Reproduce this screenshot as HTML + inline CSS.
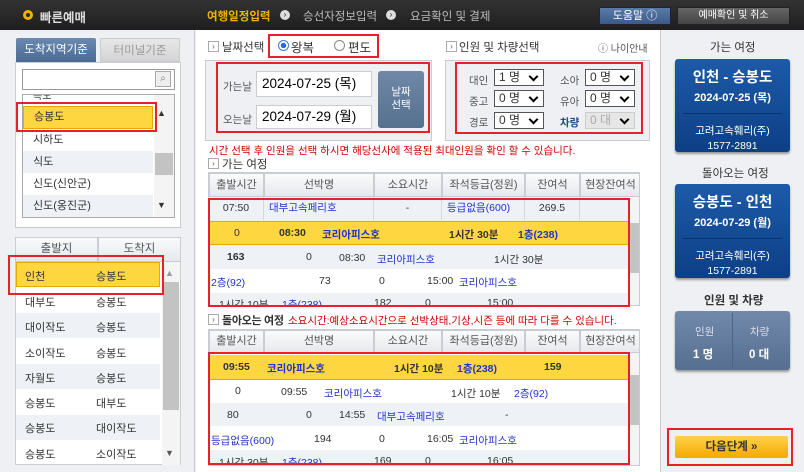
<!DOCTYPE html>
<html><head><meta charset="utf-8"><style>
*{margin:0;padding:0;box-sizing:border-box}
body{width:804px;height:472px;overflow:hidden;background:#eef0f3;font-family:"Liberation Sans","Noto Sans CJK KR",sans-serif;font-size:10.5px;color:#333;position:relative}
.a{position:absolute}
.red{position:absolute;border:2px solid #e8202a}
.t{position:absolute;white-space:nowrap}
.lnk{color:#2233cc}
.hd{background:linear-gradient(#fafbfc,#e6e8ec);border:1px solid #c9cdd3;color:#555;font-size:11px}
.sel{position:absolute;height:17px;border:1px solid #555;background:#fff;font-size:12px;padding-left:4px;line-height:15px}
.sel:after{content:"";position:absolute;right:6px;top:3px;width:5px;height:5px;border-right:2px solid #000;border-bottom:2px solid #000;transform:rotate(45deg)}
.card{position:absolute;background:linear-gradient(#1d5aa8,#0d3f86);border-radius:3px;color:#fff;text-align:center;box-shadow:0 2px 2px #999}
.cell{position:absolute;text-align:center;line-height:23px;border-right:1px solid #d5d8dd;height:23px}
.arr{position:absolute;width:11px;height:11px;border:1px solid #aaa;background:#fff;font-size:8px;line-height:9px;text-align:center;color:#555}
</style></head><body>
<!-- header -->
<div class="a" style="left:0;top:0;width:804px;height:30px;background:linear-gradient(#333,#1e1e1e)"></div>
<div class="a" style="left:23px;top:10px;width:10px;height:10px;border:3px solid #f0b400;border-radius:50%"></div>
<div class="t" style="left:40px;top:7px;color:#ddd;font-size:12.5px;font-weight:bold">빠른예매</div>
<div class="t" style="left:207px;top:8px;color:#f0b400;font-size:11.5px;font-weight:bold">여행일정입력</div>
<div class="a" style="left:280px;top:10px;width:10px;height:10px;border-radius:50%;background:#ddd;color:#222;font-size:8px;line-height:10px;text-align:center">›</div>
<div class="t" style="left:303px;top:8px;color:#bbb;font-size:11.5px">승선자정보입력</div>
<div class="a" style="left:386px;top:10px;width:10px;height:10px;border-radius:50%;background:#ddd;color:#222;font-size:8px;line-height:10px;text-align:center">›</div>
<div class="t" style="left:410px;top:8px;color:#bbb;font-size:11.5px">요금확인 및 결제</div>
<div class="a" style="left:599px;top:7px;width:72px;height:18px;background:linear-gradient(#5a7aa8,#3a5a88);border:1px solid #223;color:#fff;font-size:11px;line-height:16px;text-align:center">도움말 ⓘ</div>
<div class="a" style="left:677px;top:7px;width:113px;height:18px;background:linear-gradient(#666,#444);border:1px solid #222;color:#fff;font-size:10px;line-height:16px;text-align:center">예매확인 및 취소</div>

<!-- left panel -->
<div class="a" style="left:0;top:30px;width:195px;height:442px;background:#eef0f3;border-right:1px solid #ccc"></div>
<div class="a" style="left:16px;top:38px;width:80px;height:24px;background:linear-gradient(#6a8ab0,#4a6a92);color:#fff;font-size:11.5px;text-align:center;line-height:24px;border-radius:2px 2px 0 0">도착지역기준</div>
<div class="a" style="left:100px;top:38px;width:80px;height:24px;background:linear-gradient(#e8e8e8,#d3d3d3);color:#999;font-size:11.5px;text-align:center;line-height:24px;border:1px solid #ccc">터미널기준</div>
<div class="a" style="left:15px;top:62px;width:166px;height:166px;background:#fff;border:1px solid #c9cdd3"></div>
<div class="a" style="left:22px;top:69px;width:153px;height:21px;border:1px solid #999;background:#fff"></div>
<div class="a" style="left:155px;top:71px;width:16px;height:16px;border:1px solid #aaa;background:#eee;font-size:10px;text-align:center;line-height:14px;color:#777">⌕</div>
<div class="a" style="left:22px;top:94px;width:153px;height:124px;border:1px solid #aaa;background:#fff;overflow:hidden">
 <div class="a" style="left:0;top:-8px;width:130px;height:18px;padding-left:10px;font-size:10px">흑도</div>
 <div class="a" style="left:0;top:11px;width:130px;height:23px;background:#fdd640;border:1px solid #e8a800;padding-left:10px;line-height:21px;font-size:11px">승봉도</div>
 <div class="a" style="left:0;top:34px;width:130px;height:22px;padding-left:10px;line-height:22px;font-size:11px">시하도</div>
 <div class="a" style="left:0;top:56px;width:130px;height:22px;background:#eef2f7;padding-left:10px;line-height:22px;font-size:11px">식도</div>
 <div class="a" style="left:0;top:78px;width:130px;height:22px;padding-left:10px;line-height:22px;font-size:11px">신도(신안군)</div>
 <div class="a" style="left:0;top:100px;width:130px;height:22px;background:#eef2f7;padding-left:10px;line-height:22px;font-size:11px">신도(옹진군)</div>
 <div class="a" style="left:131px;top:0;width:20px;height:124px;background:#f4f4f4"></div>
 <div class="a" style="left:132px;top:58px;width:18px;height:22px;background:#c3c3c3"></div>
 <div class="t" style="left:134px;top:13px;font-size:9px">▲</div>
 <div class="t" style="left:134px;top:105px;font-size:9px">▼</div>
</div>
<div class="red" style="left:16px;top:102px;width:141px;height:30px"></div>

<div class="a" style="left:15px;top:237px;width:166px;height:228px;background:#fff;border:1px solid #c9cdd3"></div>
<div class="a hd" style="left:15px;top:237px;width:83px;height:25px;text-align:center;line-height:23px;font-size:11.5px">출발지</div>
<div class="a hd" style="left:98px;top:237px;width:83px;height:25px;text-align:center;line-height:23px;font-size:11.5px">도착지</div>
<div class="a" style="left:162px;top:262px;width:18px;height:203px;background:#f4f4f4"></div>
<div class="a" style="left:163px;top:282px;width:16px;height:128px;background:#c3c3c3"></div>
<div class="t" style="left:165px;top:268px;font-size:9px;color:#999">▲</div>
<div class="t" style="left:165px;top:448px;font-size:9px;color:#555">▼</div>
<div class="a" style="left:16px;top:262px;width:144px;height:25px;background:#fdd640;border:1px solid #e8a800"></div>
<div class="t" style="left:25px;top:268px;font-size:11px">인천</div><div class="t" style="left:96px;top:268px;font-size:11px">승봉도</div>
<div class="a" style="left:16px;top:313px;width:144px;height:25px;background:#eef2f7"></div>
<div class="a" style="left:16px;top:364px;width:144px;height:25px;background:#eef2f7"></div>
<div class="a" style="left:16px;top:415px;width:144px;height:25px;background:#eef2f7"></div>
<div class="t" style="left:25px;top:294px;font-size:11px">대부도</div><div class="t" style="left:96px;top:294px;font-size:11px">승봉도</div>
<div class="t" style="left:25px;top:319px;font-size:11px">대이작도</div><div class="t" style="left:96px;top:319px;font-size:11px">승봉도</div>
<div class="t" style="left:25px;top:345px;font-size:11px">소이작도</div><div class="t" style="left:96px;top:345px;font-size:11px">승봉도</div>
<div class="t" style="left:25px;top:370px;font-size:11px">자월도</div><div class="t" style="left:96px;top:370px;font-size:11px">승봉도</div>
<div class="t" style="left:25px;top:395px;font-size:11px">승봉도</div><div class="t" style="left:96px;top:395px;font-size:11px">대부도</div>
<div class="t" style="left:25px;top:420px;font-size:11px">승봉도</div><div class="t" style="left:96px;top:420px;font-size:11px">대이작도</div>
<div class="t" style="left:25px;top:446px;font-size:11px">승봉도</div><div class="t" style="left:96px;top:446px;font-size:11px">소이작도</div>
<div class="red" style="left:8px;top:255px;width:156px;height:40px"></div>

<!-- middle -->
<div class="a" style="left:196px;top:30px;width:464px;height:442px;background:#fff"></div>
<div class="arr" style="left:208px;top:41px">›</div>
<div class="t" style="left:222px;top:39px;font-size:11.5px">날짜선택</div>
<div class="a" style="left:278px;top:40px;width:11px;height:11px;border-radius:50%;border:1px solid #3a7bd5;background:radial-gradient(#2a6bd5 40%,#fff 45%)"></div>
<div class="t" style="left:291px;top:37px;font-size:12.5px">왕복</div>
<div class="a" style="left:334px;top:40px;width:11px;height:11px;border-radius:50%;border:1px solid #888;background:#fff"></div>
<div class="t" style="left:348px;top:37px;font-size:12.5px">편도</div>
<div class="red" style="left:268px;top:34px;width:111px;height:24px"></div>
<div class="a" style="left:205px;top:60px;width:227px;height:81px;background:#eef0f3;border:1px solid #ccc"></div>
<div class="t" style="left:223px;top:79px;font-size:10.5px;color:#555">가는날</div>
<div class="t" style="left:223px;top:112px;font-size:10.5px;color:#555">오는날</div>
<div class="a" style="left:256px;top:71px;width:116px;height:26px;background:#fff;border:1px solid #ccc;font-size:13.5px;line-height:24px;padding-left:5px;color:#000">2024-07-25 (목)</div>
<div class="a" style="left:256px;top:105px;width:116px;height:24px;background:#fff;border:1px solid #ccc;font-size:13.5px;line-height:22px;padding-left:5px;color:#000">2024-07-29 (월)</div>
<div class="a" style="left:378px;top:71px;width:46px;height:57px;background:linear-gradient(#6f88a8,#56708f);border-radius:3px;color:#fff;font-size:10.5px;text-align:center;padding-top:15px;line-height:13px">날짜<br>선택</div>
<div class="red" style="left:216px;top:62px;width:214px;height:71px"></div>

<div class="arr" style="left:446px;top:41px">›</div>
<div class="t" style="left:459px;top:39px;font-size:11.5px">인원 및 차량선택</div>
<div class="t" style="left:598px;top:40px;font-size:10px;color:#555">ⓘ 나이안내</div>
<div class="a" style="left:445px;top:60px;width:205px;height:81px;background:#eef0f3;border:1px solid #ccc"></div>
<div class="t" style="left:469px;top:73px;color:#555">대인</div>
<div class="t" style="left:469px;top:94px;color:#555">중고</div>
<div class="t" style="left:469px;top:115px;color:#555">경로</div>
<div class="t" style="left:560px;top:73px;color:#555">소아</div>
<div class="t" style="left:560px;top:94px;color:#555">유아</div>
<div class="t" style="left:560px;top:115px;color:#234a8a;font-weight:bold">차량</div>
<div class="sel" style="left:494px;top:69px;width:50px">1 명</div>
<div class="sel" style="left:494px;top:90px;width:50px">0 명</div>
<div class="sel" style="left:494px;top:112px;width:50px">0 명</div>
<div class="sel" style="left:585px;top:69px;width:50px">0 명</div>
<div class="sel" style="left:585px;top:90px;width:50px">0 명</div>
<div class="sel" style="left:585px;top:112px;width:50px;background:#e6e6e6;border-color:#ccc;color:#aaa">0 대</div>
<div class="red" style="left:455px;top:62px;width:188px;height:72px"></div>

<div class="t" style="left:209px;top:143px;font-size:10.5px;color:#d10000">시간 선택 후 인원을 선택 하시면 해당선사에 적용된 최대인원을 확인 할 수 있습니다.</div>
<div class="arr" style="left:208px;top:158px">›</div>
<div class="t" style="left:222px;top:156px;font-size:11.5px">가는 여정</div>

<!-- table 1 -->
<div class="a" style="left:208px;top:172px;width:432px;height:134px;border:1px solid #c9cdd3;background:#fff;overflow:hidden">
 <div class="a hd" style="left:0;top:0;width:55px;height:24px;text-align:center;line-height:22px">출발시간</div>
 <div class="a hd" style="left:55px;top:0;width:110px;height:24px;text-align:center;line-height:22px">선박명</div>
 <div class="a hd" style="left:165px;top:0;width:68px;height:24px;text-align:center;line-height:22px">소요시간</div>
 <div class="a hd" style="left:233px;top:0;width:83px;height:24px;text-align:center;line-height:22px">좌석등급(정원)</div>
 <div class="a hd" style="left:316px;top:0;width:55px;height:24px;text-align:center;line-height:22px">잔여석</div>
 <div class="a hd" style="left:371px;top:0;width:61px;height:24px;text-align:center;line-height:22px">현장잔여석</div>
 <div class="a" style="left:0;top:24px;width:420px;height:24px;background:#eef2f7"></div>
 <div class="cell" style="left:0;top:24px;width:55px">07:50</div>
 <div class="cell lnk" style="left:55px;top:24px;width:110px;text-align:left;padding-left:5px">대부고속페리호</div>
 <div class="cell" style="left:165px;top:24px;width:68px">-</div>
 <div class="cell lnk" style="left:233px;top:24px;width:83px;text-align:left;padding-left:5px">등급없음(600)</div>
 <div class="cell" style="left:316px;top:24px;width:55px">269.5</div>
 <div class="a" style="left:0;top:48px;width:420px;height:24px;background:#fdd640;border-top:1px solid #e8a800;border-bottom:1px solid #e8a800"></div>
 <div class="t" style="left:25px;top:54px">0</div><div class="t" style="left:70px;top:54px;font-weight:bold">08:30</div>
 <div class="t lnk" style="left:113px;top:54px;font-weight:bold">코리아피스호</div>
 <div class="t" style="left:240px;top:54px;font-weight:bold">1시간 30분</div>
 <div class="t lnk" style="left:309px;top:54px;font-weight:bold">1층(238)</div>
 <div class="a" style="left:0;top:72px;width:420px;height:24px;background:#eef2f7"></div>
 <div class="t" style="left:18px;top:78px;font-weight:bold">163</div><div class="t" style="left:97px;top:78px">0</div><div class="t" style="left:130px;top:79px">08:30</div>
 <div class="t lnk" style="left:168px;top:79px">코리아피스호</div><div class="t" style="left:285px;top:79px">1시간 30분</div>
 <div class="t lnk" style="left:2px;top:102px">2층(92)</div><div class="t" style="left:110px;top:102px">73</div><div class="t" style="left:170px;top:102px">0</div><div class="t" style="left:218px;top:102px">15:00</div>
 <div class="t lnk" style="left:250px;top:102px">코리아피스호</div>
 <div class="a" style="left:0;top:120px;width:420px;height:14px;background:#eef2f7"></div>
 <div class="t" style="left:10px;top:124px">1시간 10분</div><div class="t lnk" style="left:73px;top:124px">1층(238)</div><div class="t" style="left:165px;top:124px">182</div><div class="t" style="left:216px;top:124px">0</div><div class="t" style="left:278px;top:124px">15:00</div>
 <div class="a" style="left:421px;top:24px;width:11px;height:110px;background:#f4f4f4"></div>
 <div class="a" style="left:421px;top:50px;width:11px;height:50px;background:#c3c3c3"></div>
</div>
<div class="red" style="left:208px;top:198px;width:422px;height:109px"></div>

<div class="arr" style="left:208px;top:314px">›</div>
<div class="t" style="left:222px;top:312px;font-size:11px;font-weight:bold;letter-spacing:-0.3px">돌아오는 여정</div>
<div class="t" style="left:288px;top:313px;font-size:10.5px;color:#d10000">소요시간:예상소요시간으로 선박상태,기상,시즌 등에 따라 다를 수 있습니다.</div>

<!-- table 2 -->
<div class="a" style="left:208px;top:329px;width:432px;height:137px;border:1px solid #c9cdd3;background:#fff;overflow:hidden">
 <div class="a hd" style="left:0;top:0;width:55px;height:23px;text-align:center;line-height:21px">출발시간</div>
 <div class="a hd" style="left:55px;top:0;width:110px;height:23px;text-align:center;line-height:21px">선박명</div>
 <div class="a hd" style="left:165px;top:0;width:68px;height:23px;text-align:center;line-height:21px">소요시간</div>
 <div class="a hd" style="left:233px;top:0;width:83px;height:23px;text-align:center;line-height:21px">좌석등급(정원)</div>
 <div class="a hd" style="left:316px;top:0;width:55px;height:23px;text-align:center;line-height:21px">잔여석</div>
 <div class="a hd" style="left:371px;top:0;width:61px;height:23px;text-align:center;line-height:21px">현장잔여석</div>
 <div class="a" style="left:0;top:25px;width:420px;height:25px;background:#fdd640;border-bottom:1px solid #e8a800"></div>
 <div class="t" style="left:14px;top:31px;font-weight:bold">09:55</div>
 <div class="t lnk" style="left:58px;top:31px;font-weight:bold">코리아피스호</div>
 <div class="t" style="left:185px;top:31px;font-weight:bold">1시간 10분</div>
 <div class="t lnk" style="left:248px;top:31px;font-weight:bold">1층(238)</div>
 <div class="t" style="left:335px;top:31px;font-weight:bold">159</div>
 <div class="t" style="left:26px;top:55px">0</div><div class="t" style="left:72px;top:56px">09:55</div><div class="t lnk" style="left:115px;top:56px">코리아피스호</div><div class="t" style="left:242px;top:56px">1시간 10분</div><div class="t lnk" style="left:305px;top:56px">2층(92)</div>
 <div class="a" style="left:0;top:73px;width:420px;height:23px;background:#eef2f7"></div>
 <div class="t" style="left:18px;top:79px">80</div><div class="t" style="left:97px;top:79px">0</div><div class="t" style="left:130px;top:79px">14:55</div><div class="t lnk" style="left:168px;top:79px">대부고속페리호</div><div class="t" style="left:296px;top:79px">-</div>
 <div class="t lnk" style="left:2px;top:103px">등급없음(600)</div><div class="t" style="left:105px;top:103px">194</div><div class="t" style="left:170px;top:103px">0</div><div class="t" style="left:218px;top:103px">16:05</div><div class="t lnk" style="left:250px;top:103px">코리아피스호</div>
 <div class="a" style="left:0;top:120px;width:420px;height:17px;background:#eef2f7"></div>
 <div class="t" style="left:10px;top:125px">1시간 30분</div><div class="t lnk" style="left:73px;top:125px">1층(238)</div><div class="t" style="left:165px;top:125px">169</div><div class="t" style="left:216px;top:125px">0</div><div class="t" style="left:278px;top:125px">16:05</div>
 <div class="a" style="left:421px;top:23px;width:11px;height:114px;background:#f4f4f4"></div>
 <div class="a" style="left:421px;top:45px;width:11px;height:50px;background:#c3c3c3"></div>
</div>
<div class="red" style="left:208px;top:352px;width:422px;height:113px"></div>

<!-- right sidebar -->
<div class="a" style="left:660px;top:30px;width:144px;height:442px;background:#eef0f3;border-left:1px solid #ccc"></div>
<div class="t" style="left:710px;top:39px;font-size:11.5px;color:#333">가는 여정</div>
<div class="card" style="left:675px;top:59px;width:115px;height:93px">
 <div style="font-size:14.5px;font-weight:bold;margin-top:7px">인천 - 승봉도</div>
 <div style="font-size:11px;font-weight:bold;margin-top:2px">2024-07-25 (목)</div>
 <div style="border-top:1px solid #0a336e;margin:8px 8px 0;padding-top:9px;font-size:10.5px">고려고속훼리(주)</div>
 <div style="font-size:10.5px;margin-top:2px">1577-2891</div>
</div>
<div class="t" style="left:702px;top:165px;font-size:11.5px;color:#333">돌아오는 여정</div>
<div class="card" style="left:675px;top:184px;width:115px;height:94px">
 <div style="font-size:14.5px;font-weight:bold;margin-top:7px">승봉도 - 인천</div>
 <div style="font-size:11px;font-weight:bold;margin-top:2px">2024-07-29 (월)</div>
 <div style="border-top:1px solid #0a336e;margin:8px 8px 0;padding-top:9px;font-size:10.5px">고려고속훼리(주)</div>
 <div style="font-size:10.5px;margin-top:2px">1577-2891</div>
</div>
<div class="t" style="left:704px;top:292px;font-size:11.5px;font-weight:bold;color:#333">인원 및 차량</div>
<div class="a" style="left:675px;top:311px;width:115px;height:59px;background:linear-gradient(#7189aa,#566f90);border-radius:3px;box-shadow:0 2px 2px #999;color:#fff">
 <div class="a" style="left:57px;top:2px;width:1px;height:55px;background:#4c6585"></div>
 <div class="t" style="left:20px;top:13px;font-size:10.5px;color:#dde">인원</div>
 <div class="t" style="left:75px;top:13px;font-size:10.5px;color:#dde">차량</div>
 <div class="t" style="left:18px;top:35px;font-size:11.5px;font-weight:bold">1 명</div>
 <div class="t" style="left:74px;top:35px;font-size:11.5px;font-weight:bold">0 대</div>
</div>
<div class="a" style="left:675px;top:436px;width:113px;height:22px;background:linear-gradient(#ffd24a,#f5a800);border-radius:2px;text-align:center;line-height:22px;font-size:11.5px;font-weight:bold;color:#333">다음단계 »</div>
<div class="red" style="left:667px;top:428px;width:126px;height:38px"></div>
</body></html>
